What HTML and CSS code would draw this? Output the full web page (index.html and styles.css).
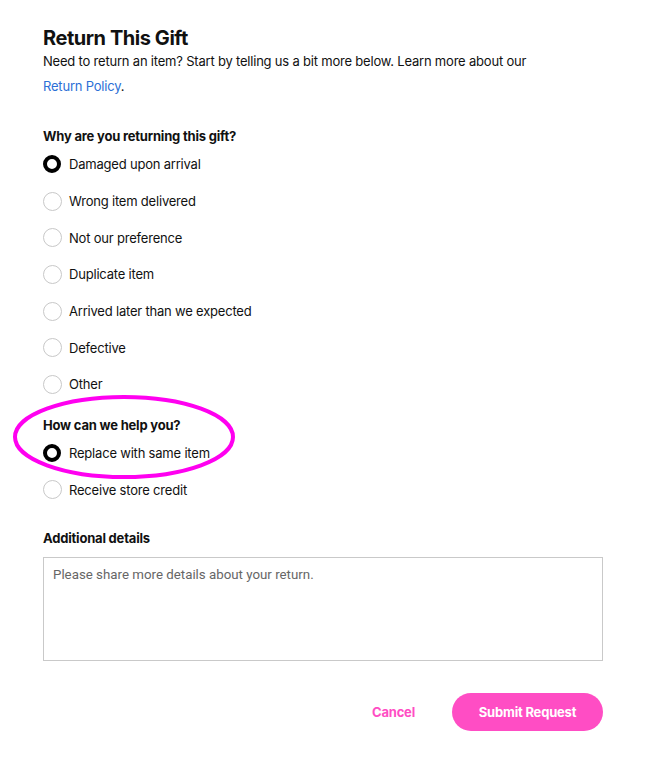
FILE: index.html
```html
<!DOCTYPE html>
<html>
<head>
<meta charset="utf-8">
<link rel="stylesheet" href="styles.css">
</head>
<body>
<div class="page">
  <h1 class="title">Return This Gift</h1>
  <p class="intro">Need to return an item? Start by telling us a bit more below. Learn more about our</p>
  <p class="policy"><a class="link" href="#">Return Policy</a>.</p>

  <div class="group group-reason">
    <div class="group-label">Why are you returning this gift?</div>
    <div class="options">
      <label class="option"><span class="radio checked"></span><span>Damaged upon arrival</span></label>
      <label class="option"><span class="radio"></span><span>Wrong item delivered</span></label>
      <label class="option"><span class="radio"></span><span>Not our preference</span></label>
      <label class="option"><span class="radio"></span><span>Duplicate item</span></label>
      <label class="option"><span class="radio"></span><span>Arrived later than we expected</span></label>
      <label class="option"><span class="radio"></span><span>Defective</span></label>
      <label class="option"><span class="radio"></span><span>Other</span></label>
    </div>
  </div>

  <div class="group group-help">
    <div class="group-label">How can we help you?</div>
    <div class="options">
      <label class="option"><span class="radio checked"></span><span>Replace with same item</span></label>
      <label class="option"><span class="radio"></span><span>Receive store credit</span></label>
    </div>
    <svg class="annotation" width="226" height="90" viewBox="0 0 226 90"><ellipse cx="113" cy="43" rx="109" ry="40" fill="none" stroke="#ff00f0" stroke-width="4"/></svg>
  </div>

  <div class="details">
    <div class="group-label">Additional details</div>
    <div class="textarea">Please share more details about your return.</div>
  </div>

  <div class="actions">
    <button class="btn-cancel">Cancel</button>
    <button class="btn-submit">Submit Request</button>
  </div>
</div>
</body>
</html>
```
FILE: styles.css
```css
* { box-sizing: border-box; }
html, body { margin: 0; padding: 0; background: #fff; }
body {
  font-family: "Inter", "Roboto", sans-serif;
  color: #111;
  font-size: 13px;
  letter-spacing: -0.2px;
}
.page {
  width: 660px;
  padding: 26px 57px 0 43px;
}
.title {
  margin: 0;
  font-size: 20px;
  line-height: 24px;
  font-weight: 700;
  letter-spacing: -0.45px;
}
.intro {
  margin: 2px 0 0;
  line-height: 18px;
}
.policy {
  margin: 7px 0 0;
  line-height: 18px;
}
.link { color: #2c6fd6; text-decoration: none; }
.group { position: relative; }
.group-reason { margin-top: 32px; }
.group-label {
  font-weight: 700;
  line-height: 18px;
  font-size: 13px;
}
.options { display: flex; flex-direction: column; }
.option {
  display: flex;
  align-items: center;
  gap: 7px;
  height: 36.7px;
}
.group-label + .options { margin-top: 1px; }
.radio {
  width: 19px;
  height: 19px;
  border-radius: 50%;
  border: 1px solid #c8c8c8;
  flex: none;
}
.radio.checked {
  border: 4px solid #000;
  width: 18px;
  height: 18px;
  margin: 0 1px 0 0;
}
.group-help { margin-top: 13px; }
.annotation {
  position: absolute;
  left: -32px;
  top: -22px;
  pointer-events: none;
}
.details { margin-top: 21px; }
.textarea {
  margin-top: 10px;
  height: 104px;
  border: 1px solid #c9c9c9;
  padding: 9px 9px;
  font-family: "Roboto", sans-serif;
  font-size: 13.3px;
  letter-spacing: 0;
  color: #666;
  line-height: 16px;
}
.actions {
  display: flex;
  justify-content: flex-end;
  align-items: center;
  gap: 37px;
  margin-top: 32px;
}
.btn-cancel {
  border: 0;
  background: none;
  font-family: "Inter", sans-serif;
  font-weight: 700;
  font-size: 13px;
  letter-spacing: -0.2px;
  color: #ff4dc4;
  padding: 0;
}
.btn-submit {
  border: 0;
  background: #ff4dc4;
  color: #fff;
  font-family: "Inter", sans-serif;
  font-weight: 700;
  font-size: 13px;
  letter-spacing: -0.2px;
  height: 38px;
  width: 151px;
  border-radius: 19px;
}
```
